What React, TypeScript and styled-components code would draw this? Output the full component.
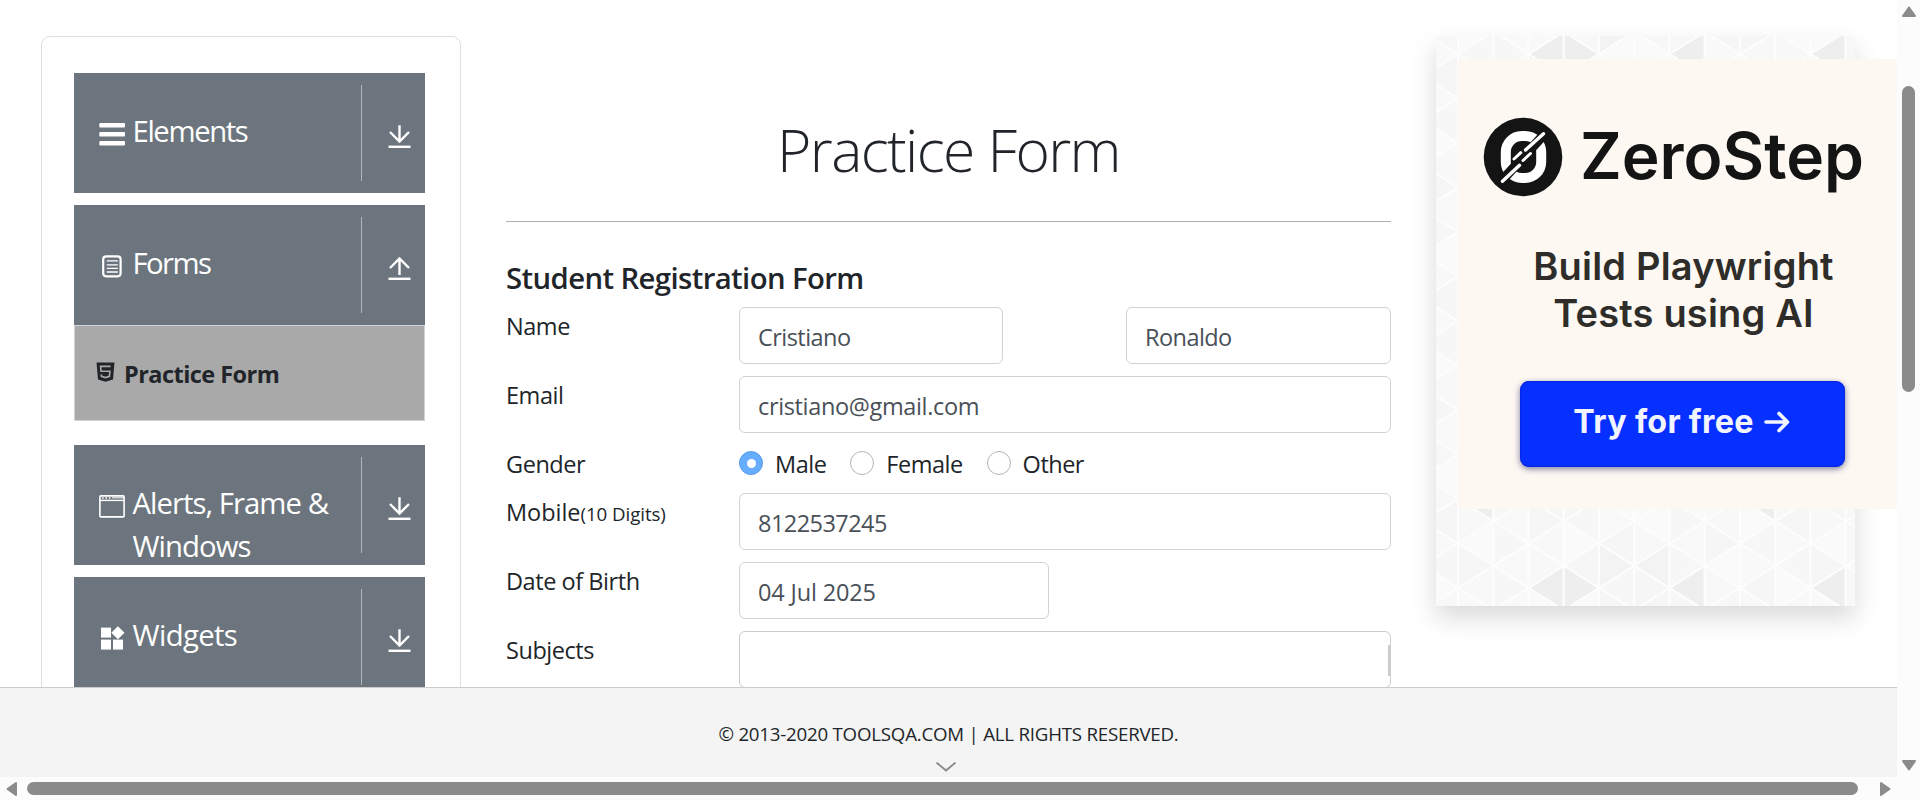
import React from "react";
import styled, { createGlobalStyle } from "styled-components";

const GlobalStyle = createGlobalStyle`
  *, *::before, *::after { box-sizing: border-box; }
  html, body { margin: 0; padding: 0; overflow: hidden; background: #fff; }
  body {
    font-family: "Open Sans", "Noto Sans", sans-serif;
    font-size: 23.5px;
    font-stretch: 94%;
    line-height: 36px;
    color: #212529;
  }
  svg { display: block; flex: none; }
`;

const Window = styled.div`
  display: grid;
  grid-template-columns: 1897px 23px;
  grid-template-rows: 777px 23px;
  width: 1920px;
  height: 800px;
  overflow: hidden;
`;

const Page = styled.div`
  display: flex;
  flex-direction: column;
  overflow: hidden;
`;

const Columns = styled.div`
  display: flex;
  align-items: flex-start;
  height: 687px;
  padding: 36px 0 0 41px;
  overflow: hidden;
`;

/* ---------- sidebar ---------- */

const Sidebar = styled.nav`
  width: 420px;
  height: 900px;
  flex: none;
  padding: 36px 35px 0 32px;
  border: 1px solid #dfdfdf;
  border-radius: 9px;
`;

const Group = styled.section`
  margin-bottom: 12px;
`;

const GroupHeader = styled.div`
  display: flex;
  height: 120px;
  background: #6c757d;
  color: #fff;
  overflow: hidden;
`;

const GroupTitle = styled.div`
  display: flex;
  flex: 1;
  padding: 37px 0 0 25px;
`;

const GroupIcon = styled.span`
  width: 33.5px;
  padding-top: 12px;
  flex: none;
`;

const GroupName = styled.span<{ $tracking: number }>`
  font-size: 29.3px;
  line-height: 43px;
  letter-spacing: ${(p) => p.$tracking}px;
  white-space: pre;
`;

const GroupDivider = styled.span`
  width: 1px;
  height: 96px;
  margin-top: 12px;
  background: #b1b6ba;
`;

const GroupToggle = styled.span`
  width: 63px;
  padding: 51px 0 0 26px;
`;

const SubItem = styled.div`
  display: flex;
  height: 96px;
  margin-bottom: 24px;
  padding: 30px 0 0 21px;
  gap: 9px;
  border: 1px solid #ced4da;
  background: #a9a9a9;
  font-weight: 700;
  font-size: 23.5px;
  letter-spacing: -0.55px;

  svg { margin-top: 6px; }
`;

/* ---------- form ---------- */

const Main = styled.main`
  width: 885px;
  margin-left: 45px;
  flex: none;
`;

const Title = styled.h1`
  margin: 0;
  padding: 78px 0 36px;
  font-size: 58.8px;
  font-weight: 300;
  line-height: 71px;
  letter-spacing: -1.6px;
  text-align: center;
  border-bottom: 1px solid #b0b1b2;
`;

const Subtitle = styled.h5`
  margin: 38px 0 11px;
  font-size: 29.3px;
  font-weight: 600;
  line-height: 36px;
  letter-spacing: -0.6px;
  white-space: nowrap;
`;

const Row = styled.div<{ $height?: number }>`
  display: flex;
  height: ${(p) => p.$height ?? 57}px;
  margin-bottom: 12px;
`;

const Label = styled.label<{ $tracking?: number }>`
  width: 233px;
  flex: none;
  padding-top: 1px;
  letter-spacing: ${(p) => p.$tracking ?? -0.45}px;
  white-space: nowrap;

  small { font-size: 18.7px; }
`;

const Fields = styled.div`
  display: flex;
  flex: 1;
  justify-content: space-between;
`;

const Input = styled.input<{ $width?: string; $tracking?: number }>`
  width: ${(p) => p.$width ?? "100%"};
  height: 57px;
  padding: 3px 18px 0;
  border: 1px solid #ced4da;
  border-radius: 6px;
  outline: none;
  background: #fff;
  color: #495057;
  font: inherit;
  letter-spacing: ${(p) => p.$tracking ?? -0.55}px;
`;

const SubjectsBox = styled.div`
  display: flex;
  justify-content: flex-end;
  align-items: center;
  width: 100%;
  height: 57px;
  border: 1px solid #ccc;
  border-radius: 6px;
`;

const SubjectsSeparator = styled.span`
  width: 2px;
  height: 31px;
  margin-top: 1px;
  background: #ccc;
`;

const RadioGroup = styled.div`
  display: flex;
  gap: 24px;
`;

const RadioOption = styled.label`
  display: flex;
  gap: 12px;
  padding-top: 1px;
  letter-spacing: -0.5px;
`;

const RadioDot = styled.span<{ $on?: boolean }>`
  display: flex;
  align-items: center;
  justify-content: center;
  width: 24px;
  height: 24px;
  margin-top: 5px;
  border: 1px solid ${(p) => (p.$on ? "#5a9be6" : "#adb5bd")};
  border-radius: 50%;
  background: ${(p) => (p.$on ? "#66adff" : "#fff")};

  &::after {
    content: "";
    width: 9px;
    height: 9px;
    border-radius: 50%;
    background: #fff;
  }
`;

/* ---------- promo ---------- */

const PromoFrame = styled.aside`
  display: grid;
  width: 419px;
  height: 570px;
  margin-left: 45px;
  flex: none;
  background: #fff;
  box-shadow: 0 12px 24px rgba(0, 0, 0, 0.15);

  > * { grid-area: 1 / 1; }
`;

const PromoCard = styled.div`
  z-index: 1;
  display: flex;
  flex-direction: column;
  width: 439px;
  height: 450px;
  margin: 23px 0 0 22px;
  padding: 58px 0 0 25px;
  background: #fdf8f2;
  color: #141414;
  font-family: Inter, sans-serif;
  font-stretch: normal;
  white-space: nowrap;
`;

const Brand = styled.div`
  display: flex;
  align-items: center;
  gap: 17px;
  height: 80px;
`;

const BrandName = styled.span`
  margin-top: -2px;
  font-size: 64px;
  font-weight: 600;
`;

const Pitch = styled.div`
  width: 401px;
  margin-top: 46px;
  font-size: 38px;
  font-weight: 600;
  line-height: 47px;
  letter-spacing: 0.2px;
  text-align: center;
  color: #2e2d2a;
`;

const PromoButton = styled.div`
  display: flex;
  align-items: center;
  justify-content: center;
  gap: 10px;
  width: 325px;
  height: 86px;
  margin: 44px 0 0 37px;
  padding: 0 2px 4px 0;
  border-radius: 9px;
  background: #0630ff;
  box-shadow: 0 2px 6px rgba(20, 20, 90, 0.55), inset 0 0 2px #0010b0;
  color: #f2f5ff;
  font-size: 32.3px;
  font-weight: 700;
  letter-spacing: 0.3px;
`;

/* ---------- footer and scrollbars ---------- */

const Footer = styled.footer`
  display: flex;
  flex-direction: column;
  align-items: center;
  height: 90px;
  padding-top: 28px;
  border-top: 1px solid #ccc;
  background: #f4f4f4;
  font-size: 18.7px;
  letter-spacing: -0.22px;

  svg { margin: 10px 0 0 -5px; }
`;

const VScroll = styled.div`
  display: flex;
  flex-direction: column;
  align-items: center;
  padding: 6px 0;
  background: #fcfcfc;
`;

const HScroll = styled.div`
  display: flex;
  align-items: center;
  padding: 0 6px;
  background: #fcfcfc;
`;

const VThumb = styled.div`
  width: 13px;
  height: 307px;
  margin: 68px 0 367px;
  border-radius: 7px;
  background: #8b8b8b;
`;

const HThumb = styled.div`
  width: 1832px;
  height: 13px;
  margin: 0 21px 0 9px;
  border-radius: 7px;
  background: #8b8b8b;
`;

const Corner = styled.div`
  background: #fcfcfc;
`;

/* ---------- drawings ---------- */

const BarsIcon = () => (
  <svg width="26" height="26" viewBox="0 0 26 26" fill="#fff">
    <rect x="0.3" y="1" width="25.7" height="4.4" rx="1" />
    <rect x="0.3" y="10" width="25.7" height="4.4" rx="1" />
    <rect x="0.3" y="19" width="25.7" height="4.4" rx="1" />
  </svg>
);

const FormIcon = () => (
  <svg width="26" height="26" viewBox="0 0 26 26" fill="none" stroke="#fff">
    <rect x="4.2" y="2.3" width="17.4" height="20" rx="3" strokeWidth="2.2" />
    <path d="M7.8 6.8h11M7.8 10.8h11M7.8 14.3h11M7.8 18h11" strokeWidth="1.3" />
  </svg>
);

const WindowIcon = () => (
  <svg width="26" height="26" viewBox="0 0 26 26" fill="none" stroke="#fff">
    <rect x="0.9" y="1.9" width="24.2" height="21" rx="1" strokeWidth="1.6" />
    <path d="M1 6.4h24" strokeWidth="1.4" />
    <path d="M3 4h1.6M6.4 4h1.6M9.8 4h1.6" strokeWidth="1.6" />
    <path d="M13 3.8h12" strokeWidth="1" />
  </svg>
);

const WidgetsIcon = () => (
  <svg width="26" height="26" viewBox="0 0 26 26" fill="#fff">
    <rect x="2" y="1.6" width="10" height="10" />
    <rect x="2" y="13.6" width="10" height="10" />
    <rect x="14" y="13.6" width="10" height="10" />
    <path d="M18.9 0.2l6.6 6.5-6.6 6.6-6.6-6.6z" />
  </svg>
);

const ShieldIcon = () => (
  <svg width="19" height="20" viewBox="0 0 19 20">
    <path d="M0.5 0.5h18L17 17.6l-7.5 2.2L2 17.6z" fill="#212529" />
    <path
      d="M14.6 4.4H4.6l0.4 4.9h8.9l-0.5 5-4 1.3-3.9-1.3-0.2-2"
      fill="none"
      stroke="#a9a9a9"
      strokeWidth="1.6"
    />
  </svg>
);

const ArrowIcon = ({ up = false }: { up?: boolean }) => (
  <svg width="23" height="25" viewBox="0 0 23 25" fill="none" stroke="#fff" strokeWidth="2.4">
    <path d={up ? "M11.5 19V3M2 12l9.5-9.5 9.5 9.5" : "M11.5 1.2v16.3M2 8l9.5 9.5 9.5-9.5"} />
    <path d="M0.5 22.8h22" />
  </svg>
);

const BrandMark = () => (
  <svg width="80" height="80" viewBox="0 0 80 80">
    <circle cx="40" cy="40" r="39.3" fill="#141414" />
    <rect x="22.8" y="19" width="35.4" height="42" rx="16" fill="none" stroke="#fff" strokeWidth="10" />
    <path d="M18 64.5L62 16.5" stroke="#141414" strokeWidth="9.5" />
    <path d="M19.5 64.3L36.5 48.3M42.5 33L60.5 16.7" stroke="#fff" strokeWidth="3.4" strokeLinecap="round" />
    <path d="M31 42l6.8-6.3M40 43.5l7.5-7" stroke="#fff" strokeWidth="3" strokeLinecap="round" />
  </svg>
);

const PromoArrow = () => (
  <svg width="26" height="24" viewBox="0 0 26 24" fill="none" stroke="#f2f5ff" strokeWidth="3.6" strokeLinecap="round" strokeLinejoin="round">
    <path d="M2 12h21M15 3.5l8.5 8.5-8.5 8.5" />
  </svg>
);

const STEP_X = 35.25;
const STEP_Y = 44.5;
const DARK = new Set([
  "2:0:L", "3:0:R", "6:0:L", "10:0:L", "0:10:L", "8:10:L",
  "2:12:L", "3:12:R", "6:12:L", "10:12:L",
]);
const MID = new Set(["4:0:R", "4:12:R", "5:12:L"]);

/* A strip of left and right pointing triangles per column of the lattice. */
const Triangles = () => {
  const shapes: React.ReactNode[] = [];
  const rowY = (k: number, j: number) => 18 + STEP_Y * j - (Math.abs(k) % 2 === 1 ? STEP_Y / 2 : 0);
  for (let k = -1; k < 12; k++) {
    const x0 = 22 + STEP_X * k;
    const x1 = x0 + STEP_X;
    for (let j = -1; j < 15; j++) {
      (["L", "R"] as const).forEach((dir) => {
        const tip = dir === "L" ? rowY(k, j) : rowY(k + 1, j);
        const tx = dir === "L" ? x0 : x1;
        const ex = dir === "L" ? x1 : x0;
        const key = `${k}:${j}:${dir}`;
        const noise = (Math.abs(k * 37 + j * 53 + (dir === "L" ? 11 : 29) + k * j * 7) % 5) - 2;
        const shade = DARK.has(key) ? 238 : MID.has(key) ? 243 : 248 + noise;
        shapes.push(
          <polygon
            key={key}
            points={`${tx},${tip} ${ex},${tip - STEP_Y / 2} ${ex},${tip + STEP_Y / 2}`}
            fill={`rgb(${shade},${shade},${shade})`}
          />
        );
      });
    }
  }
  return (
    <svg width="419" height="570" viewBox="0 0 419 570">
      <g stroke="#fdfdfd" strokeWidth="2" strokeLinejoin="round">{shapes}</g>
    </svg>
  );
};

const triangles = {
  up: "M8 1.5L14 10H2z",
  down: "M8 10.5L14 2H2z",
  left: "M1.5 8L10 2v12z",
  right: "M10.5 8L2 2v12z",
};

const ScrollArrow = ({ dir }: { dir: keyof typeof triangles }) => {
  const vertical = dir === "up" || dir === "down";
  const w = vertical ? 16 : 12;
  const h = vertical ? 12 : 16;
  return (
    <svg width={w} height={h} viewBox={`0 0 ${w} ${h}`}>
      <path d={triangles[dir]} fill="#8b8b8b" stroke="#8b8b8b" strokeWidth="2" strokeLinejoin="round" />
    </svg>
  );
};

/* ---------- composition ---------- */

type MenuGroupProps = {
  icon: React.ReactNode;
  name: string;
  tracking: number;
  open?: boolean;
  children?: React.ReactNode;
};

const MenuGroup = ({ icon, name, tracking, open, children }: MenuGroupProps) => (
  <Group>
    <GroupHeader>
      <GroupTitle>
        <GroupIcon>{icon}</GroupIcon>
        <GroupName $tracking={tracking}>{name}</GroupName>
      </GroupTitle>
      <GroupDivider />
      <GroupToggle>
        <ArrowIcon up={open} />
      </GroupToggle>
    </GroupHeader>
    {children}
  </Group>
);

export default function App() {
  return (
    <>
      <GlobalStyle />
      <Window>
        <Page>
          <Columns>
            <Sidebar>
              <MenuGroup icon={<BarsIcon />} name="Elements" tracking={-1.4} />
              <MenuGroup icon={<FormIcon />} name="Forms" tracking={-1.6} open>
                <SubItem>
                  <ShieldIcon />
                  Practice Form
                </SubItem>
              </MenuGroup>
              <MenuGroup icon={<WindowIcon />} name={"Alerts, Frame &\nWindows"} tracking={-0.95} />
              <MenuGroup icon={<WidgetsIcon />} name="Widgets" tracking={-0.65} />
            </Sidebar>

            <Main>
              <Title>Practice Form</Title>
              <Subtitle>Student Registration Form</Subtitle>
              <Row>
                <Label>Name</Label>
                <Fields>
                  <Input $width="264px" defaultValue="Cristiano" />
                  <Input $width="265px" defaultValue="Ronaldo" />
                </Fields>
              </Row>
              <Row>
                <Label>Email</Label>
                <Input $tracking={-0.35} defaultValue="cristiano@gmail.com" />
              </Row>
              <Row $height={36}>
                <Label>Gender</Label>
                <RadioGroup>
                  <RadioOption><RadioDot $on /><span>Male</span></RadioOption>
                  <RadioOption><RadioDot /><span>Female</span></RadioOption>
                  <RadioOption><RadioDot /><span>Other</span></RadioOption>
                </RadioGroup>
              </Row>
              <Row>
                <Label $tracking={-0.05}>Mobile<small>(10 Digits)</small></Label>
                <Input defaultValue="8122537245" />
              </Row>
              <Row>
                <Label>Date of Birth</Label>
                <Input $width="310px" $tracking={-0.15} defaultValue="04 Jul 2025" />
              </Row>
              <Row>
                <Label>Subjects</Label>
                <SubjectsBox><SubjectsSeparator /></SubjectsBox>
              </Row>
            </Main>

            <PromoFrame>
              <Triangles />
              <PromoCard>
                <Brand>
                  <BrandMark />
                  <BrandName>ZeroStep</BrandName>
                </Brand>
                <Pitch>Build Playwright<br />Tests using AI</Pitch>
                <PromoButton>Try for free<PromoArrow /></PromoButton>
              </PromoCard>
            </PromoFrame>
          </Columns>
          <Footer>
            <span>© 2013-2020 TOOLSQA.COM | ALL RIGHTS RESERVED.</span>
            <svg width="22" height="10" viewBox="0 0 22 10" fill="none" stroke="#8a8a8a" strokeWidth="1.9">
              <path d="M1.5 0.6l9.5 8 9.5-8" />
            </svg>
          </Footer>
        </Page>
        <VScroll>
          <ScrollArrow dir="up" />
          <VThumb />
          <ScrollArrow dir="down" />
        </VScroll>
        <HScroll>
          <ScrollArrow dir="left" />
          <HThumb />
          <ScrollArrow dir="right" />
        </HScroll>
        <Corner />
      </Window>
    </>
  );
}
